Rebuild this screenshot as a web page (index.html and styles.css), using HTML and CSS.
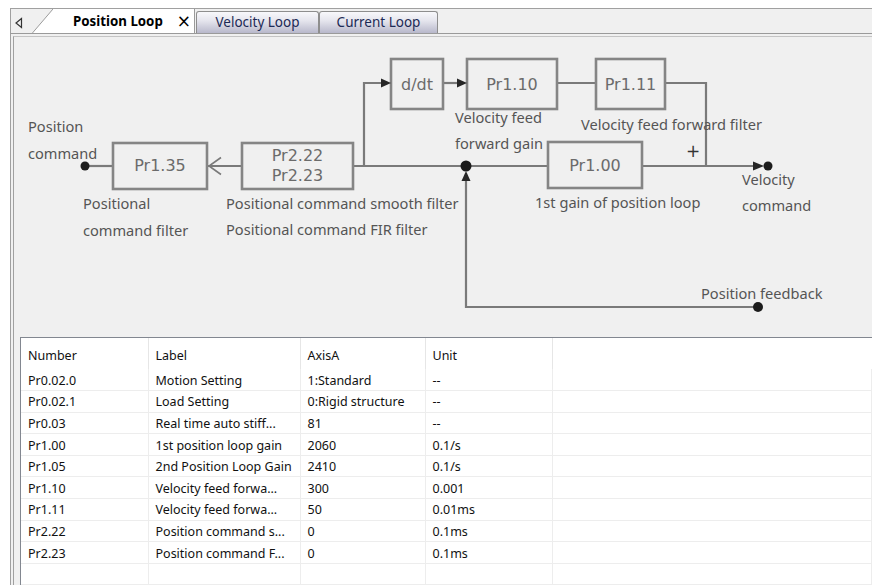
FILE: index.html
```html
<!DOCTYPE html>
<html lang="en">
<head>
    <meta charset="UTF-8">
    <meta name="viewport" content="width=device-width, initial-scale=1.0">
    <title>Position Loop</title>
    <link rel="stylesheet" href="styles.css">
</head>
<body>
    <div class="window">
        <div class="tabbar">
            <div class="tab-scroll">
                <svg width="10" height="12" viewBox="0 0 10 12"><polygon points="7.5,1.5 2,6 7.5,10.5" fill="none" stroke="#333" stroke-width="1.2"/></svg>
            </div>
            <svg class="tab-slant" width="21" height="24" viewBox="0 0 21 24">
                <polygon points="0,24 21,0 21,24" fill="#fff"/>
                <line x1="0" y1="24.5" x2="21" y2="0" stroke="#9a9a9a" stroke-width="1"/>
            </svg>
            <div class="tab tab-active">
                <span class="tab-label">Position Loop</span>
                <span class="tab-close">&times;</span>
            </div>
            <div class="tab tab-velocity">Velocity Loop</div>
            <div class="tab tab-current">Current Loop</div>
        </div>

        <div class="panel">
            <div class="panel-inner">
                <!-- viewBox uses page coordinates so the nodes can be placed where they sit in the picture -->
                <svg class="diagram" width="858" height="300" viewBox="14 37 858 300">
                    <g class="wire">
                        <line x1="85" y1="166" x2="113" y2="166"/>
                        <line x1="208" y1="166" x2="242" y2="166"/>
                        <polyline class="chevron" points="221,157.5 209,166 221,174.5"/>
                        <line x1="353" y1="166" x2="548" y2="166"/>
                        <polyline points="364,166 364,83 384,83"/>
                        <line x1="443" y1="83" x2="460" y2="83"/>
                        <line x1="557" y1="83" x2="596" y2="83"/>
                        <polyline points="665,83 706,83 706,166"/>
                        <line x1="642" y1="166" x2="756" y2="166"/>
                        <polyline points="758,307 466,307 466,178"/>
                    </g>

                    <g class="block">
                        <rect x="113" y="143" width="94" height="46"/>
                        <rect x="242" y="143" width="111" height="46"/>
                        <rect x="391" y="59" width="52" height="50"/>
                        <rect x="467" y="59" width="90" height="50"/>
                        <rect x="596" y="59" width="69" height="50"/>
                        <rect x="548" y="142" width="94" height="46"/>
                    </g>

                    <g class="arrow">
                        <polygon points="391,83 381,78.5 381,87.5"/>
                        <polygon points="467,83 457,78.5 457,87.5"/>
                        <polygon points="764,166 753,161.5 753,170.5"/>
                        <polygon points="466,171 461.5,181 470.5,181"/>
                    </g>

                    <g class="dot">
                        <circle cx="85" cy="166" r="4.5"/>
                        <circle cx="466" cy="166" r="5.5"/>
                        <circle cx="768" cy="166" r="4.5"/>
                        <circle cx="758" cy="307" r="5"/>
                    </g>

                    <g class="block-label">
                        <text x="160" y="171">Pr1.35</text>
                        <text x="297.5" y="160.5">Pr2.22</text>
                        <text x="297.5" y="181">Pr2.23</text>
                        <text x="417" y="89.5">d/dt</text>
                        <text x="512" y="90">Pr1.10</text>
                        <text x="630.5" y="90">Pr1.11</text>
                        <text x="595" y="170.5">Pr1.00</text>
                    </g>

                    <text class="sum" x="693" y="157">+</text>

                    <g class="caption">
                        <text x="28" y="131.5">Position</text>
                        <text x="28" y="158.5">command</text>
                        <text x="83" y="209">Positional</text>
                        <text x="83" y="235.5">command filter</text>
                        <text x="226" y="208.5">Positional command smooth filter</text>
                        <text x="226" y="235">Positional command FIR filter</text>
                        <text x="455" y="123">Velocity feed</text>
                        <text x="455" y="149">forward gain</text>
                        <text x="581" y="129.5">Velocity feed forward filter</text>
                        <text x="535" y="207.5">1st gain of position loop</text>
                        <text x="742" y="185">Velocity</text>
                        <text x="742" y="211">command</text>
                        <text x="701" y="298.5">Position feedback</text>
                    </g>
                </svg>

                <div class="table-wrap">
                    <table class="params">
                        <colgroup>
                            <col class="col-number">
                            <col class="col-label">
                            <col class="col-axis">
                            <col class="col-unit">
                            <col>
                        </colgroup>
                        <thead>
                            <tr>
                                <th>Number</th>
                                <th>Label</th>
                                <th>AxisA</th>
                                <th>Unit</th>
                                <th class="filler"></th>
                            </tr>
                        </thead>
                        <tbody>
                            <tr><td>Pr0.02.0</td><td>Motion Setting</td><td>1:Standard</td><td>--</td><td></td></tr>
                            <tr><td>Pr0.02.1</td><td>Load Setting</td><td>0:Rigid structure</td><td>--</td><td></td></tr>
                            <tr><td>Pr0.03</td><td>Real time auto stiff...</td><td>81</td><td>--</td><td></td></tr>
                            <tr><td>Pr1.00</td><td>1st position loop gain</td><td>2060</td><td>0.1/s</td><td></td></tr>
                            <tr><td>Pr1.05</td><td>2nd Position Loop Gain</td><td>2410</td><td>0.1/s</td><td></td></tr>
                            <tr><td>Pr1.10</td><td>Velocity feed forwa...</td><td>300</td><td>0.001</td><td></td></tr>
                            <tr><td>Pr1.11</td><td>Velocity feed forwa...</td><td>50</td><td>0.01ms</td><td></td></tr>
                            <tr><td>Pr2.22</td><td>Position command s...</td><td>0</td><td>0.1ms</td><td></td></tr>
                            <tr><td>Pr2.23</td><td>Position command F...</td><td>0</td><td>0.1ms</td><td></td></tr>
                            <tr><td></td><td></td><td></td><td></td><td></td></tr>
                        </tbody>
                    </table>
                </div>
            </div>
        </div>
    </div>
</body>
</html>
```

FILE: styles.css
```css
body {
    margin: 0;
    background-color: #ffffff;
    font-family: "Noto Sans", "DejaVu Sans", sans-serif;
    overflow: hidden;
}
.window {
    margin: 8px 0 0 10px;
}

/* tab strip */
.tabbar {
    display: flex;
    height: 24px;
    background-color: #f0f0f0;
    border-top: 1px solid #a0a0a0;
    border-left: 1px solid #a0a0a0;
    border-bottom: 1px solid #9a9a9a;
}
.tab-scroll {
    width: 21px;
    padding: 3px 0 0 3px;
    box-sizing: border-box;
}
.tab-slant {
    display: block;
    flex: none;
}
.tab {
    box-sizing: border-box;
    height: 22px;
    margin-top: 2px;
    border: 1px solid #8e8e8e;
    border-bottom: none;
    border-radius: 3px 3px 0 0;
    background: linear-gradient(#f8f8fb, #e6e6ee 40%, #b8b8cb);
    color: #1d2a55;
    font-size: 13.5px;
    line-height: 20px;
    text-align: center;
}
.tab-active {
    width: 142px;
    height: 24px;
    margin-top: 0;
    border: none;
    border-right: 1px solid #9a9a9a;
    border-radius: 0;
    background: #ffffff;
    color: #000000;
    display: flex;
    align-items: center;
    padding-left: 20px;
    line-height: 24px;
    text-align: left;
}
.tab-label {
    font-weight: bold;
    font-size: 13.3px;
}
.tab-close {
    margin-left: 14px;
    font-size: 17px;
    font-family: "DejaVu Sans", sans-serif;
    line-height: 24px;
}
.tab-velocity {
    width: 123px;
    margin-left: 1px;
}
.tab-current {
    width: 119px;
    margin-left: 0;
}

/* panel */
.panel {
    border-left: 1px solid #a0a0a0;
    padding: 2px 0 0 2px;
    background-color: #f0f0f0;
}
.panel-inner {
    border-left: 1px solid #a0a0a0;
    border-top: 1px solid #c4c4c4;
    background-color: #f0f0f0;
}
.diagram {
    display: block;
}
.wire line, .wire polyline {
    stroke: #7a7a7a;
    stroke-width: 2.2;
    fill: none;
}
.wire .chevron {
    stroke-width: 1.6;
}
.block rect {
    stroke: #858585;
    stroke-width: 2.6;
    fill: none;
}
.arrow polygon {
    fill: #262626;
}
.dot circle {
    fill: #1c1c1c;
}
.block-label text {
    font-family: "DejaVu Sans", sans-serif;
    font-size: 16px;
    fill: #6b6b6b;
    text-anchor: middle;
}
.sum {
    font-family: "DejaVu Sans", sans-serif;
    font-size: 17px;
    fill: #333333;
    text-anchor: middle;
}
.caption text {
    font-family: "Noto Sans", sans-serif;
    font-size: 14.6px;
    fill: #555555;
}

/* parameter table */
.table-wrap {
    margin-left: 6px;
    border-top: 1px solid #828790;
    border-left: 1px solid #828790;
    background-color: #ffffff;
}
.params {
    width: 100%;
    table-layout: fixed;
    border-collapse: collapse;
    font-size: 12.5px;
    color: #111111;
}
.col-number { width: 127px; }
.col-label { width: 152px; }
.col-axis { width: 125px; }
.col-unit { width: 127px; }
.params th {
    height: 31px;
    padding: 3px 0 0 7px;
    font-weight: normal;
    text-align: left;
    border-right: 1px solid #e6e6e6;
    box-sizing: border-box;
}
.params th.filler {
    border-right: none;
}
.params td {
    height: 21.6px;
    padding: 2px 0 0 7px;
    line-height: 18px;
    border-right: 1px solid #ededed;
    border-bottom: 1px solid #ededed;
    white-space: nowrap;
    overflow: hidden;
    box-sizing: border-box;
}
```
